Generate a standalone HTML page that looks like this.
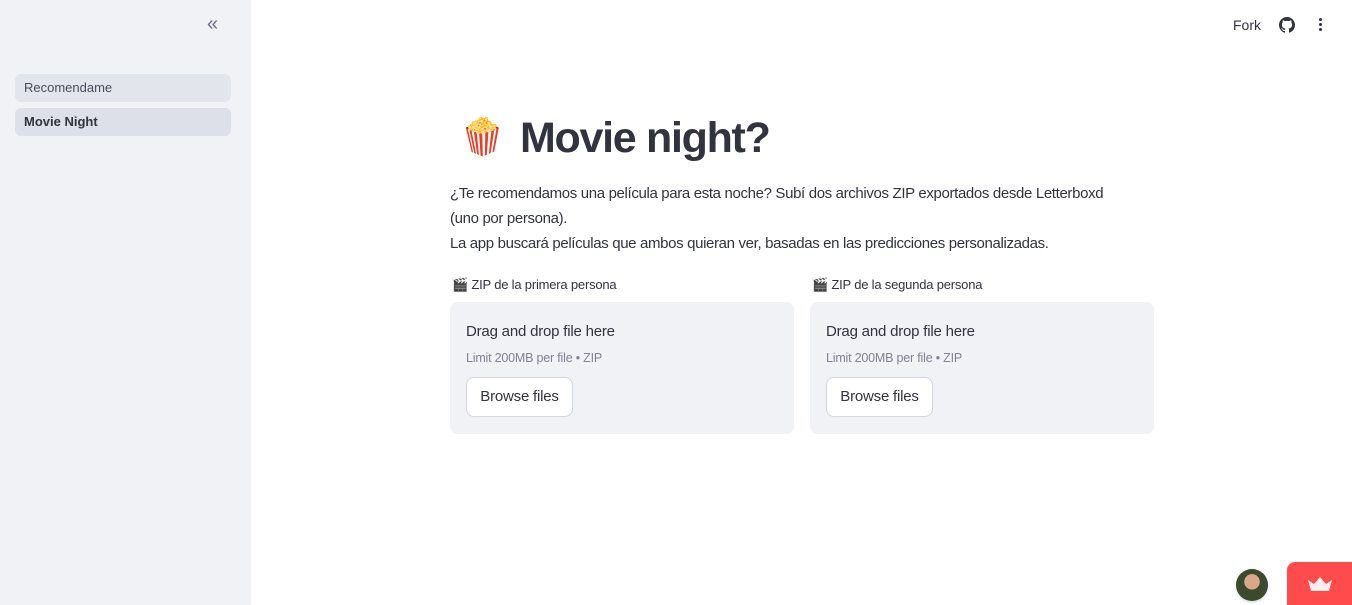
<!DOCTYPE html>
<html><head><meta charset="utf-8"><style>
*{box-sizing:border-box;margin:0;padding:0}
body{width:1352px;height:605px;overflow:hidden;font-family:"Liberation Sans",sans-serif;color:#31333f;background:#fff;position:relative}
.side{position:absolute;left:0;top:0;width:251px;height:605px;background:#f0f2f6}
.nav{position:absolute;left:15px;width:216px;height:28px;border-radius:6px;background:#e2e5ec;font-size:13px;line-height:28px;padding-left:9px}
.abs{position:absolute}
p.t{font-size:15px;line-height:25px;letter-spacing:-0.35px}
.box{position:absolute;top:302px;width:344px;height:132px;background:#f0f2f6;border-radius:8px;padding:21px 16px}
.box .a{font-size:15px;letter-spacing:-0.2px}
.box .b{font-size:12.5px;color:#808495;margin-top:11px;letter-spacing:-0.2px}
.btn{margin-top:12px;width:107px;height:40px;border:1px solid #d5d7de;border-radius:8px;background:#fff;font-size:15px;text-align:center;line-height:38px;letter-spacing:-0.2px}
.lbl{position:absolute;top:277px;font-size:13px;letter-spacing:-0.2px}
</style></head><body>
<div class="side">
<div class="abs" style="left:207px;top:13px;font-size:20px;color:#6b6f7e">«</div>
<div class="nav" style="top:74px;background:#e2e5ec;color:#4a4d59">Recomendame</div>
<div class="nav" style="top:108px;background:#dde0e9;font-weight:bold">Movie Night</div>
</div>
<div class="abs" style="left:1233px;top:17px;font-size:14px">Fork</div>
<svg class="abs" style="left:1279px;top:17px" width="16" height="16" viewBox="0 0 16 16"><path fill="#31333f" d="M8 0C3.58 0 0 3.58 0 8c0 3.540 2.29 6.53 5.47 7.59.4.07.55-.17.55-.38v-1.33c-2.23.48-2.7-1.07-2.7-1.070-.36-.92-.89-1.17-.89-1.17-.73-.5.06-.49.06-.49.8.06 1.23.83 1.23.83.71 1.22 1.87.87 2.33.66.07-.52.28-.87.5-1.07-1.78-.2-3.64-.89-3.640-3.950 0-.87.31-1.59.83-2.15-.08-.2-.36-1.02.08-2.12 0 0 .67-.21 2.2.82A7.6 7.6 0 018 3.9c.68 0 1.36.09 2 .27 1.53-1.04 2.2-.82 2.2-.82.44 1.1.16 1.92.08 2.12.51.56.82 1.27.82 2.15 0 3.07-1.87 3.75-3.65 3.95.29.25.54.73.54 1.48v2.2c0 .21.15.46.55.38A8 8 0 0016 8c0-4.42-3.58-8-8-8z"/></svg>
<div class="abs" style="left:1319px;top:18px;width:3px">
<div style="width:3px;height:3px;border-radius:50%;background:#31333f;margin-bottom:2px"></div><div style="width:3px;height:3px;border-radius:50%;background:#31333f;margin-bottom:2px"></div><div style="width:3px;height:3px;border-radius:50%;background:#31333f"></div></div>
<div class="abs" style="left:460px;top:116px;font-size:36px">🍿</div>
<div class="abs" style="left:520px;top:114px;font-size:43px;font-weight:bold;letter-spacing:-1.3px">Movie night?</div>
<div class="abs" style="left:450px;top:181px;width:720px">
<p class="t">¿Te recomendamos una película para esta noche? Subí dos archivos ZIP exportados desde Letterboxd<br>(uno por persona).</p>
<p class="t">La app buscará películas que ambos quieran ver, basadas en las predicciones personalizadas.</p></div>
<div class="lbl" style="left:452px">🎬 ZIP de la primera persona</div>
<div class="lbl" style="left:812px">🎬 ZIP de la segunda persona</div>
<div class="box" style="left:450px"><div class="a">Drag and drop file here</div><div class="b">Limit 200MB per file • ZIP</div><div class="btn">Browse files</div></div>
<div class="box" style="left:810px"><div class="a">Drag and drop file here</div><div class="b">Limit 200MB per file • ZIP</div><div class="btn">Browse files</div></div>
<div class="abs" style="left:1236px;top:569px;width:32px;height:32px;border-radius:50%;background:radial-gradient(circle at 50% 40%,#d9a88a 0 30%,#3b4a2c 32%);box-shadow:0 1px 3px rgba(0,0,0,.2)"></div>
<div class="abs" style="left:1287px;top:562px;width:65px;height:43px;background:#ff4b4b;border-radius:8px 0 0 0"></div>
<svg class="abs" style="left:1307px;top:576px" width="26" height="16" viewBox="0 0 26 16"><path fill="#fff" opacity=".9" d="M1 4l6 4 6-7 6 7 6-4-3 11H4z"/></svg>
</body></html>
